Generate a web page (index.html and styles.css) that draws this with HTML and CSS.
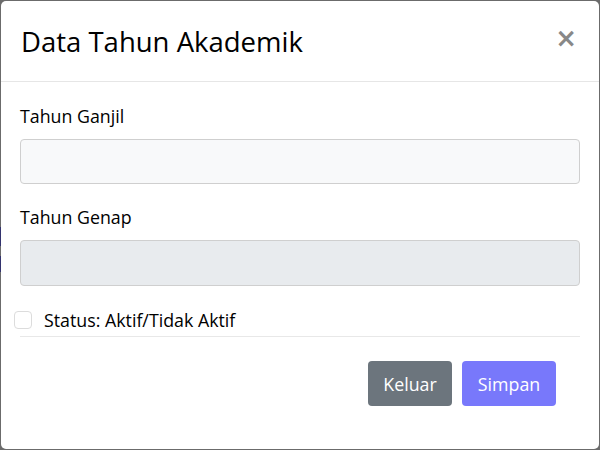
FILE: index.html
```html
<!DOCTYPE html>
<html lang="id">
<head>
<meta charset="utf-8">
<title>Data Tahun Akademik</title>
<link rel="stylesheet" href="styles.css">
</head>
<body>
<div class="backdrop">
  <div class="modal">
    <div class="modal-header">
      <h5 class="modal-title">Data Tahun Akademik</h5>
      <button class="close" type="button" aria-label="Close">&times;</button>
    </div>
    <div class="modal-body">
      <div class="form-group">
        <label class="label">Tahun Ganjil</label>
        <input class="input" type="text">
      </div>
      <div class="form-group">
        <label class="label">Tahun Genap</label>
        <input class="input input-disabled" type="text" disabled>
      </div>
      <div class="check-row">
        <span class="checkbox"></span>
        <span class="check-label">Status: Aktif/Tidak Aktif</span>
      </div>
      <div class="divider"></div>
      <div class="actions">
        <button class="btn btn-secondary" type="button">Keluar</button>
        <button class="btn btn-primary" type="button">Simpan</button>
      </div>
    </div>
  </div>
</div>
</body>
</html>
```
FILE: styles.css
```css
* { box-sizing: border-box; }
html, body { margin: 0; padding: 0; }
body {
  width: 600px;
  height: 450px;
  background:
    linear-gradient(to bottom,
      transparent 227px, #33336e 227px, #33336e 246px,
      transparent 246px, transparent 256px, #33336e 256px,
      #33336e 272px, transparent 272px) left top / 1px 450px no-repeat,
    #6b6b6b;
  font-family: "Open Sans", "Noto Sans", sans-serif;
  color: #000;
  overflow: hidden;
}
.backdrop {
  padding: 1px;
  height: 450px;
}
.modal {
  background: #fff;
  height: 448px;
  border-radius: 5px;
  display: flex;
  flex-direction: column;
}
.modal-header {
  height: 81px;
  border-bottom: 1px solid #e6e6e6;
  display: flex;
  align-items: center;
  justify-content: space-between;
  padding: 0 20px 0 20px;
}
.modal-title {
  margin: 0;
  font-size: 27.5px;
  font-weight: 400;
  line-height: 1;
  padding-top: 2px;
}
.close {
  border: 0;
  background: none;
  padding: 0;
  font-size: 26px;
  font-weight: 700;
  color: #888;
  line-height: 1;
  font-family: "DejaVu Sans", sans-serif;
  margin-top: -7px;
  margin-right: 2px;
}
.modal-body {
  padding: 20px 19px 0 19px;
}
.form-group {
  display: flex;
  flex-direction: column;
}
.label {
  font-size: 17.8px;
  line-height: 24px;
  padding-top: 2px;
  margin-bottom: 11px;
}
.input {
  height: 45px;
  border: 1px solid #cfcfcf;
  border-radius: 4px;
  background: #f8f9fa;
  margin-bottom: 19px;
  font: inherit;
}
.input-disabled {
  background: #e8ebee;
  height: 46px;
  margin-bottom: 24px;
}
.check-row {
  display: flex;
  align-items: center;
  gap: 12px;
  margin-left: -6px;
}
.checkbox {
  width: 18px;
  height: 18px;
  border: 1px solid #dcdcdc;
  border-radius: 4px;
  background: #fff;
}
.check-label {
  font-size: 17.8px;
  line-height: 20px;
}
.divider {
  margin-top: 6px;
  border-top: 1px solid #e8e8e8;
}
.actions {
  display: flex;
  justify-content: flex-end;
  gap: 10px;
  padding-right: 24px;
  margin-top: 24px;
}
.btn {
  height: 45px;
  border: 0;
  border-radius: 4px;
  color: #fff;
  font-family: inherit;
  font-size: 17.8px;
  padding: 0;
}
.btn-secondary { background: #6c757d; width: 84px; }
.btn-primary { background: #7878fb; width: 94px; }
```
